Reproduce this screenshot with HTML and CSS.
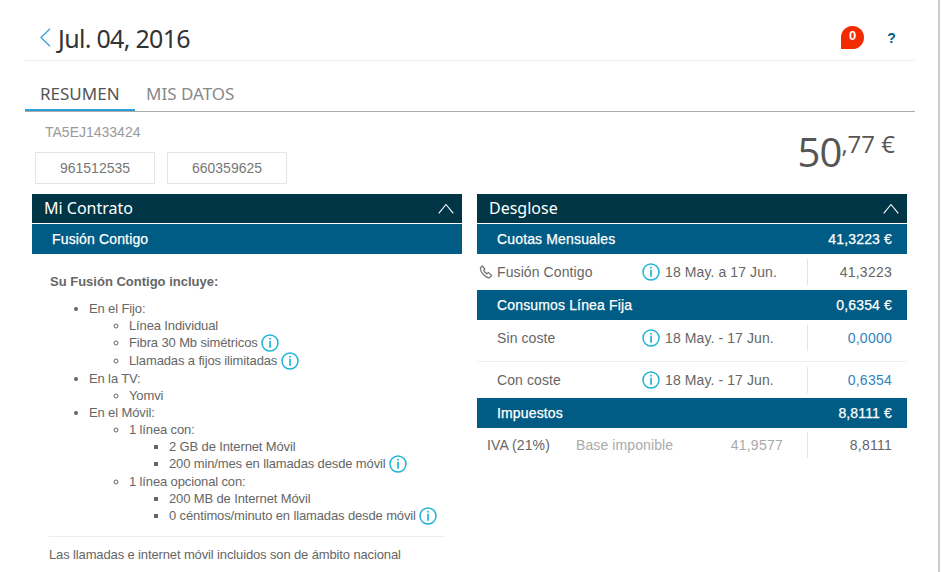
FILE: index.html
```html
<!DOCTYPE html>
<html>

<head>
    <title>Factura</title>
    <meta charset="utf-8">
    <meta name="viewport" content="width=device-width, initial-scale=1.0">
    <link rel="stylesheet" href="styles.css">
</head>

<body>
    <svg class="defs" width="0" height="0">
        <symbol id="info" viewBox="0 0 18 18">
            <circle cx="9" cy="9" r="8" fill="none" stroke="#1db4d6" stroke-width="1.5" />
            <rect x="8.2" y="3.800" width="1.7" height="1.700" fill="#1db4d6" />
            <rect x="8.2" y="6.800" width="1.7" height="7" fill="#1db4d6" />
        </symbol>
        <symbol id="up" viewBox="0 0 16 11">
            <polyline points="0.7,10.3 8,1.5 15.3,10.3" fill="none" stroke="#fff" stroke-width="1.1" />
        </symbol>
    </svg>

    <div class="page">
        <div class="top">
            <svg class="back" width="11" height="19" viewBox="0 0 11 19">
                <polyline points="10,0.7 1,9.5 10,18.3" fill="none" stroke="#2e9fd6" stroke-width="1.2" />
            </svg>
            <h1>Jul. 04, 2016</h1>
            <span class="badge">0</span>
            <span class="help">?</span>
        </div>

        <div class="tabs">
            <a class="tab active">RESUMEN</a>
            <a class="tab">MIS DATOS</a>
        </div>

        <div class="summary">
            <div>
                <p class="ref">TA5EJ1433424</p>
                <div class="lines">
                    <span class="line-box">961512535</span>
                    <span class="line-box">660359625</span>
                </div>
            </div>
            <div class="total">50<sup>,77 €</sup></div>
        </div>

        <div class="columns">
            <section class="panel">
                <div class="panel-head">
                    <h2>Mi Contrato</h2>
                    <svg class="chevron"><use href="#up"></use></svg>
                </div>
                <div class="band"><span>Fusión Contigo</span></div>
                <div class="contract">
                    <p class="contract-title">Su Fusión Contigo incluye:</p>
                    <ul>
                        <li>En el Fijo:
                            <ul>
                                <li>Línea Individual</li>
                                <li>Fibra 30 Mb simétricos <svg class="info"><use href="#info"></use></svg></li>
                                <li>Llamadas a fijos ilimitadas <svg class="info"><use href="#info"></use></svg></li>
                            </ul>
                        </li>
                        <li>En la TV:
                            <ul>
                                <li>Yomvi</li>
                            </ul>
                        </li>
                        <li>En el Móvil:
                            <ul>
                                <li>1 línea con:
                                    <ul>
                                        <li>2 GB de Internet Móvil</li>
                                        <li>200 min/mes en llamadas desde móvil <svg class="info"><use href="#info"></use></svg></li>
                                    </ul>
                                </li>
                                <li>1 línea opcional con:
                                    <ul>
                                        <li>200 MB de Internet Móvil</li>
                                        <li>0 céntimos/minuto en llamadas desde móvil <svg class="info"><use href="#info"></use></svg></li>
                                    </ul>
                                </li>
                            </ul>
                        </li>
                    </ul>
                    <p class="contract-note">Las llamadas e internet móvil incluidos son de ámbito nacional</p>
                </div>
            </section>

            <section class="panel">
                <div class="panel-head">
                    <h2>Desglose</h2>
                    <svg class="chevron"><use href="#up"></use></svg>
                </div>
                <div class="band"><span>Cuotas Mensuales</span><span>41,3223 €</span></div>
                <div class="row row-first">
                    <svg class="phone" width="14" height="14" viewBox="0 0 14 14">
                        <path d="M1.600 2.600 3.200 1l2.600 3-1.100 1.300c.5 1.300 1.900 2.800 3.300 3.500L9.300 7.600l3.300 2.700-1.700 2.200c-1 .5-2.200.2-3.600-.6C5.300 10.700 3.300 8.600 2.100 6.500 1.300 5 1.200 3.600 1.600 2.600Z" fill="none" stroke="#777" stroke-width="1.300" />
                    </svg>
                    <span class="row-label">Fusión Contigo</span>
                    <svg class="info"><use href="#info"></use></svg>
                    <span class="row-date">18 May. a 17 Jun.</span>
                    <span class="row-amount">41,3223</span>
                </div>
                <div class="band"><span>Consumos Línea Fija</span><span>0,6354 €</span></div>
                <div class="row row-sin">
                    <span class="row-label">Sin coste</span>
                    <svg class="info"><use href="#info"></use></svg>
                    <span class="row-date">18 May. - 17 Jun.</span>
                    <span class="row-amount link">0,0000</span>
                </div>
                <div class="row row-con">
                    <span class="row-label">Con coste</span>
                    <svg class="info"><use href="#info"></use></svg>
                    <span class="row-date">18 May. - 17 Jun.</span>
                    <span class="row-amount link">0,6354</span>
                </div>
                <div class="band"><span>Impuestos</span><span>8,8111 €</span></div>
                <div class="row row-tax">
                    <span class="tax-name">IVA (21%)</span>
                    <span class="tax-base">Base imponible</span>
                    <span class="tax-value">41,9577</span>
                    <span class="row-amount">8,8111</span>
                </div>
            </section>
        </div>
    </div>
</body>

</html>
```

FILE: styles.css
```css
html,
body {
    margin: 0;
    height: 100%;
    overflow: hidden;
    background-color: #fff;
}

body {
    font-family: "Liberation Sans", Arial, sans-serif;
    font-size: 14px;
    color: #666;
}

p,
h1,
h2 {
    margin: 0;
    font-weight: normal;
}

.defs {
    display: block;
}

.page {
    box-sizing: border-box;
    width: 940px;
    height: 100%;
    padding: 0 25px;
    border-right: 2px solid #ccc;
}

/* top bar */
.top {
    display: flex;
    align-items: center;
    width: 890px;
    height: 61px;
    padding: 15px 0 0 15px;
    box-sizing: border-box;
    border-bottom: 1px solid #eee;
}

.back {
    margin-right: 7px;
}

h1 {
    flex: 1;
    font-family: "Noto Sans", sans-serif;
    font-size: 25px;
    letter-spacing: -.7px;
    color: #333;
}

.badge {
    width: 23px;
    height: 23px;
    border-radius: 50% 50% 50% 0;
    background-color: #f42a00;
    color: #fff;
    font-size: 13px;
    font-weight: bold;
    text-align: center;
    line-height: 20px;
}

.help {
    width: 15px;
    margin: 0 16px 0 20px;
    font-size: 14px;
    font-weight: bold;
    color: #005c84;
    text-align: center;
}

/* tabs */
.tabs {
    display: flex;
    width: 890px;
    height: 51px;
    box-sizing: border-box;
    border-bottom: 1px solid #aaa;
    padding-top: 22px;
}

.tab {
    box-sizing: border-box;
    height: 28px;
    padding: 0 15px;
    font-family: "Noto Sans", sans-serif;
    font-size: 17px;
    line-height: 22px;
    color: #888;
}

.tab.active {
    width: 110px;
    margin-right: -4px;
    color: #555;
    border-bottom: 2px solid #2e9fd6;
}

/* summary */
.summary {
    display: flex;
    justify-content: space-between;
    width: 870px;
    height: 82px;
}

.ref {
    margin: 12px 0 0 20px;
    color: #999;
    line-height: 16px;
}

.lines {
    display: flex;
    gap: 12px;
    margin: 12px 0 0 10px;
}

.line-box {
    width: 120px;
    height: 32px;
    box-sizing: border-box;
    border: 1px solid #e4e4e4;
    text-align: center;
    line-height: 31px;
    color: #777;
}

.total {
    margin-top: 12px;
    font-family: "Open Sans", sans-serif;
    font-size: 40px;
    letter-spacing: -.9px;
    line-height: 56px;
    color: #555;
}

.total sup {
    font-size: 24px;
    letter-spacing: 0;
    line-height: 0;
    vertical-align: 14px;
}

/* panels */
.columns {
    display: flex;
    gap: 15px;
    margin-left: 7px;
}

.panel {
    width: 430px;
}

.panel-head {
    display: flex;
    justify-content: space-between;
    align-items: center;
    box-sizing: border-box;
    height: 29px;
    padding: 0 8px 0 12px;
    background-color: #003545;
    color: #fff;
}

.panel-head h2 {
    padding-bottom: 2px;
    font-family: "Noto Sans", sans-serif;
    font-size: 16px;
}

.chevron {
    width: 16px;
    height: 11px;
}

.band {
    display: flex;
    justify-content: space-between;
    box-sizing: border-box;
    height: 30px;
    padding: 0 15px 0 20px;
    background-color: #005c84;
    color: #fff;
    letter-spacing: .15px;
    -webkit-text-stroke: .25px #fff;
    line-height: 30px;
}

.panel-head + .band {
    margin-top: 1px;
}

/* contract text */
.contract {
    padding: 0 17px;
    font-size: 13px;
    letter-spacing: -.13px;
    line-height: 17px;
}

.contract-title {
    margin: 19px 0 0 1px;
    font-weight: bold;
    letter-spacing: 0;
}

.contract ul {
    margin: 0;
    padding-left: 40px;
}

.contract > ul {
    margin-top: 10px;
    padding-bottom: 11px;
    border-bottom: 1px solid #eee;
}

.contract-note {
    margin-top: 9px;
}

.contract .info {
    vertical-align: -5px;
}

.info {
    width: 18px;
    height: 18px;
    flex: none;
}

/* breakdown rows */
.row {
    display: flex;
    align-items: center;
    box-sizing: border-box;
    padding-left: 20px;
    letter-spacing: .1px;
}

.row-first,
.row-con {
    height: 36px;
}

.row-sin {
    height: 42px;
    padding-bottom: 6px;
    border-bottom: 1px solid #eee;
}

.row-tax {
    height: 34px;
    padding-left: 10px;
}

.phone {
    margin: 0 4px 0 -18px;
}

.row-label {
    width: 145px;
    flex: none;
}

.row-date {
    width: 142px;
    margin-left: 5px;
}

.row-amount {
    flex: 1;
    height: 26px;
    line-height: 26px;
    padding-right: 15px;
    border-left: 1px solid #e4e4e4;
    letter-spacing: .25px;
    text-align: right;
}

.link {
    color: #2e84c0;
}

.tax-name {
    width: 89px;
}

.tax-base {
    width: 120px;
    color: #aaa;
}

.tax-value {
    width: 87px;
    margin-right: 24px;
    letter-spacing: .25px;
    color: #aaa;
    text-align: right;
}
```
